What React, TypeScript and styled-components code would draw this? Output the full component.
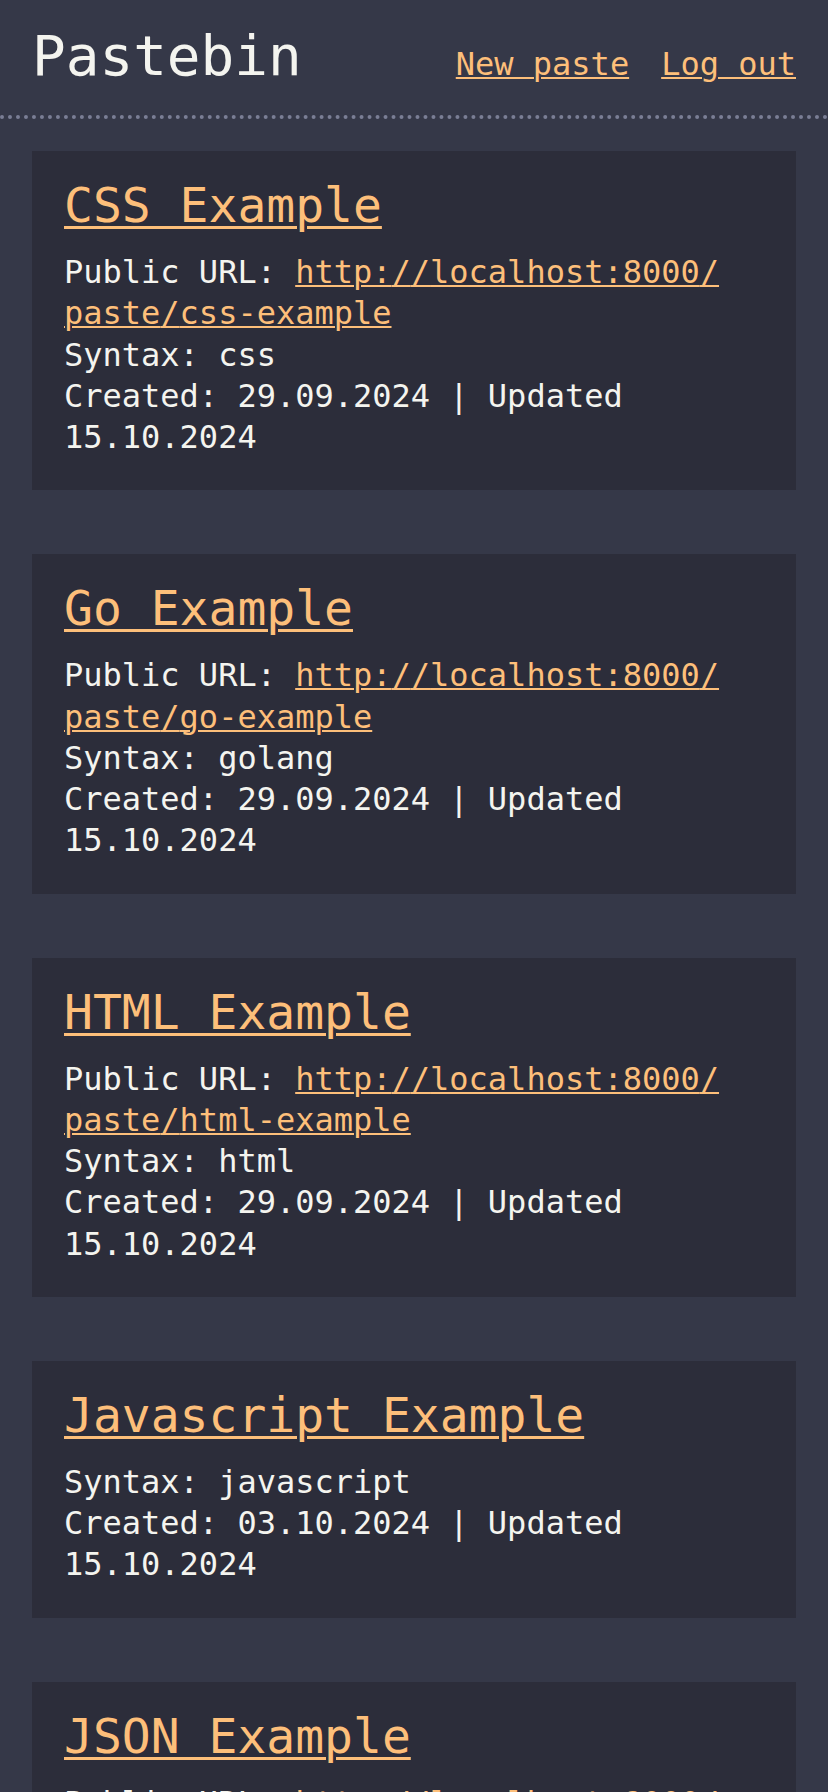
import { Fragment } from "react";
import styled, { createGlobalStyle } from "styled-components";

const colors = {
  page: "#353848",
  card: "#2c2d3a",
  text: "#f4f4ef",
  accent: "#fdbf7a",
  dots: "#7a7e95",
};

const font = `"DejaVu Sans Mono", "Liberation Mono", monospace`;

type Paste = {
  title: string;
  slug: string;
  isPublic: boolean;
  syntax: string;
  created: string;
  updated: string;
};

const pastes: Paste[] = [
  { title: "CSS Example", slug: "css-example", isPublic: true, syntax: "css", created: "29.09.2024", updated: "15.10.2024" },
  { title: "Go Example", slug: "go-example", isPublic: true, syntax: "golang", created: "29.09.2024", updated: "15.10.2024" },
  { title: "HTML Example", slug: "html-example", isPublic: true, syntax: "html", created: "29.09.2024", updated: "15.10.2024" },
  { title: "Javascript Example", slug: "javascript-example", isPublic: false, syntax: "javascript", created: "03.10.2024", updated: "15.10.2024" },
  { title: "JSON Example", slug: "json-example", isPublic: true, syntax: "json", created: "03.10.2024", updated: "15.10.2024" },
];

// let long urls wrap after a slash, like the browser the page was made in
const breakableUrl = (url: string) => {
  const parts = url.split("/");
  return parts.map((part, i) => (
    <Fragment key={i}>
      {part}
      {i < parts.length - 1 && (
        <>
          /<wbr />
        </>
      )}
    </Fragment>
  ));
};

const App = () => {
  return (
    <>
      <GlobalStyle />
      <Header>
        <Brand>Pastebin</Brand>
        <Nav>
          <NavLink href="#">New paste</NavLink>
          <NavLink href="#">Log out</NavLink>
        </Nav>
      </Header>
      <PasteList>
        {pastes.map((paste) => {
          const url = `http://localhost:8000/paste/${paste.slug}`;
          return (
            <PasteCard key={paste.slug}>
              <PasteTitle>
                <TitleLink href="#">{paste.title}</TitleLink>
              </PasteTitle>
              {paste.isPublic && (
                <MetaLine>
                  Public&nbsp;URL:&nbsp;<UrlLink href={url}>{breakableUrl(url)}</UrlLink>
                </MetaLine>
              )}
              <MetaLine>Syntax: {paste.syntax}</MetaLine>
              <MetaLine>
                Created: {paste.created} | Updated {paste.updated}
              </MetaLine>
            </PasteCard>
          );
        })}
      </PasteList>
    </>
  );
};

const GlobalStyle = createGlobalStyle`
  html, body {
    margin: 0;
    padding: 0;
    background: ${colors.page};
  }
  body {
    color: ${colors.text};
    font-family: ${font};
    font-size: 32px;
    line-height: 41.25px;
  }
  * {
    box-sizing: border-box;
  }
`;

const Header = styled.header`
  display: flex;
  align-items: baseline;
  justify-content: space-between;
  padding: 19px 32px 22px;
  border-bottom: 4px dotted ${colors.dots};
`;

const Brand = styled.div`
  font-size: 56px;
  line-height: 74px;
  color: ${colors.text};
`;

const Nav = styled.nav`
  display: flex;
  gap: 32px;
`;

const NavLink = styled.a`
  color: ${colors.accent};
  text-decoration: underline;
  text-decoration-thickness: 2px;
  text-underline-offset: 2px;
`;

const PasteList = styled.main`
  display: flex;
  flex-direction: column;
  gap: 64px;
  padding: 32px;
`;

const PasteCard = styled.article`
  background: ${colors.card};
  padding: 32px;
`;

const PasteTitle = styled.h2`
  margin: 0 0 24px;
  font-size: 48px;
  font-weight: 400;
  line-height: 45px;
`;

const TitleLink = styled.a`
  color: ${colors.accent};
  text-decoration: underline;
  text-decoration-thickness: 3px;
  text-underline-offset: 4px;
`;

const MetaLine = styled.div`
  color: ${colors.text};
`;

const UrlLink = styled.a`
  color: ${colors.accent};
  text-decoration: underline;
  text-decoration-thickness: 2px;
  text-underline-offset: 2px;
`;

export default App;
